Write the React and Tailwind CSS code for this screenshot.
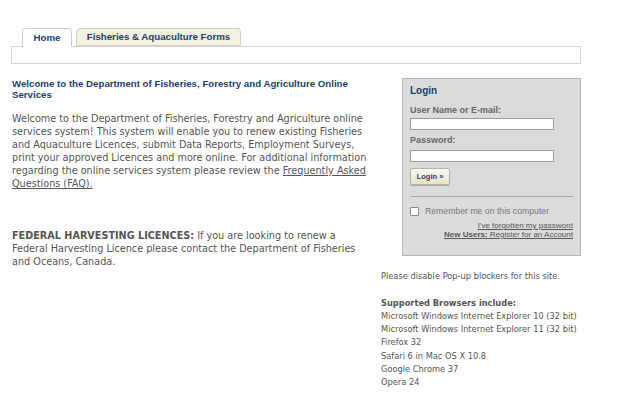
export default function App() {
  const arial = { fontFamily: '"Liberation Sans", Arial, sans-serif' };
  const tahoma = { fontFamily: '"DejaVu Sans Condensed", "DejaVu Sans", Tahoma, sans-serif' };
  return (
    <div className="w-[640px] h-[418px] bg-white overflow-hidden">
      <div className="ml-[11px] w-[570px] pt-[28px]">
        <div className="flex pl-[11px] gap-[4px] h-[18px] relative z-10" style={arial}>
          <div className="w-[50px] h-[19px] bg-white border border-b-0 border-[#cfcfcf] rounded-t-[4px] flex items-center justify-center text-[9.7px] font-bold text-[#1c3f6e]">
            Home
          </div>
          <div className="w-[165px] h-[18px] bg-[#f3f1df] border border-[#cfcfcf] rounded-t-[4px] flex items-center justify-center text-[9.7px] font-bold text-[#1c3f6e] whitespace-nowrap">
            Fisheries &amp; Aquaculture Forms
          </div>
        </div>
        <div className="h-[18px] border border-[#d4d4d4] bg-white"></div>
      </div>

      <div className="flex ml-[12px] mt-[14px]">
        <div className="w-[358px]">
          <h1 className="text-[9.7px] leading-[11px] font-bold text-[#1c3f6e]" style={arial}>
            Welcome to the Department of Fisheries, Forestry and Agriculture Online Services
          </h1>
          <p className="mt-[12px] text-[10.75px] leading-[13px] text-[#555555]" style={tahoma}>
            Welcome to the Department of Fisheries, Forestry and Agriculture online services system! This system will enable you to renew existing Fisheries and Aquaculture Licences, submit Data Reports, Employment Surveys, print your approved Licences and more online. For additional information regarding the online services system please review the{" "}
            <a className="underline text-[#555555]">Frequently Asked Questions (FAQ).</a>
          </p>
          <p className="mt-[39px] text-[10.75px] leading-[13px] text-[#555555]" style={tahoma}>
            <b>FEDERAL HARVESTING LICENCES:</b> If you are looking to renew a Federal Harvesting Licence please contact the Department of Fisheries and Oceans, Canada.
          </p>
        </div>

        <div className="ml-[11px] w-[200px]">
          <div className="ml-[21px] w-[179px] h-[178px] bg-[#dcdcdc] border border-[#b5b5b5] pl-[7px] pr-[7px] pt-[6px]" style={arial}>
            <div className="text-[10px] font-bold text-[#1c3f6e] leading-[12px]">Login</div>
            <div className="mt-[8px] text-[9px] font-bold text-[#666666] leading-[11px]">User Name or E-mail:</div>
            <div className="mt-[2px] w-[144px] h-[12px] bg-white border border-[#9a9a9a]"></div>
            <div className="mt-[5px] text-[9px] font-bold text-[#666666] leading-[11px]">Password:</div>
            <div className="mt-[4px] w-[144px] h-[12px] bg-white border border-[#9a9a9a]"></div>
            <div className="mt-[6px] w-[40px] h-[17px] rounded-[2px] border border-[#b8b3a0] bg-gradient-to-b from-[#fbfaf3] to-[#e7e2cc] shadow-[0_1px_1px_rgba(0,0,0,0.25)] flex items-center justify-center text-[7.5px] font-bold text-[#1c3f6e] whitespace-nowrap">
              Login »
            </div>
            <div className="mt-[11px] border-t border-[#a9a9a9]"></div>
            <div className="mt-[10px] flex items-center gap-[6px] h-[9px]">
              <div className="w-[9px] h-[9px] bg-white border border-[#888888] rounded-[1px] shrink-0"></div>
              <span className="text-[8.7px] text-[#777777] leading-[11px] whitespace-nowrap">Remember me on this computer</span>
            </div>
            <div className="mt-[5px] text-right text-[8px] leading-[9px] text-[#555555]">
              <div className="underline">I've forgotten my password</div>
              <div className="underline"><b>New Users:</b> Register for an Account</div>
            </div>
          </div>
          <div className="mt-[13px] text-[9.2px] leading-[13.3px] text-[#555555]" style={tahoma}>
            <div>Please disable Pop-up blockers for this site.</div>
            <div className="mt-[13.3px] font-bold">Supported Browsers include:</div>
            <div>Microsoft Windows Internet Explorer 10 (32 bit)</div>
            <div>Microsoft Windows Internet Explorer 11 (32 bit)</div>
            <div>Firefox 32</div>
            <div>Safari 6 in Mac OS X 10.8</div>
            <div>Google Chrome 37</div>
            <div>Opera 24</div>
          </div>
        </div>
      </div>
    </div>
  );
}
